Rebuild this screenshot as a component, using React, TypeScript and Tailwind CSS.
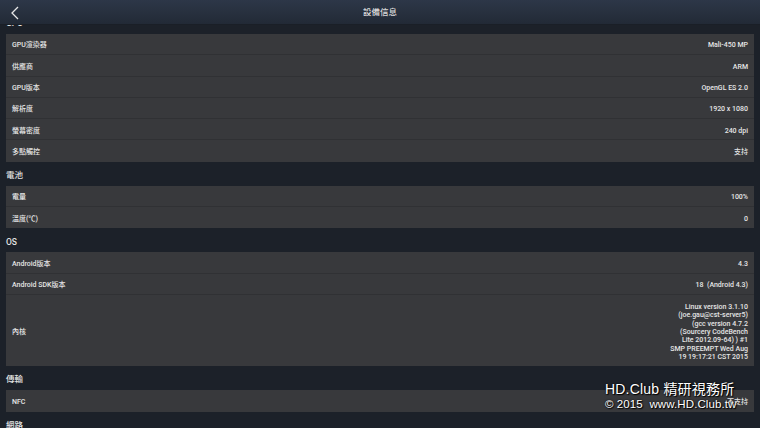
import React from 'react'

type Row = { label: string; value: React.ReactNode; tall?: boolean }

const sections: { title: string; rows: Row[] }[] = [
  {
    title: 'GPU',
    rows: [
      { label: 'GPU渲染器', value: 'Mali-450 MP' },
      { label: '供應商', value: 'ARM' },
      { label: 'GPU版本', value: 'OpenGL ES 2.0' },
      { label: '解析度', value: '1920 x 1080' },
      { label: '螢幕密度', value: '240 dpi' },
      { label: '多點觸控', value: '支持' },
    ],
  },
  {
    title: '電池',
    rows: [
      { label: '電量', value: '100%' },
      { label: '溫度(℃)', value: '0' },
    ],
  },
  {
    title: 'OS',
    rows: [
      { label: 'Android版本', value: '4.3' },
      { label: 'Android SDK版本', value: '18  (Android 4.3)' },
      {
        label: '內核',
        tall: true,
        value: [
          'Linux version 3.1.10',
          '(joe.gau@cst-server5)',
          '(gcc version 4.7.2',
          '(Sourcery CodeBench',
          'Lite 2012.09-64) ) #1',
          'SMP PREEMPT Wed Aug',
          '19 19:17:21 CST 2015',
        ].map((l) => <div key={l}>{l}</div>),
      },
    ],
  },
  {
    title: '傳輸',
    rows: [{ label: 'NFC', value: '不支持' }],
  },
  {
    title: '網路',
    rows: [{ label: 'Wi-Fi', value: '支持' }],
  },
]

function Section({ title, rows }: { title: string; rows: Row[] }) {
  return (
    <div>
      <div className="flex h-[24px] items-center px-[6px] pt-[3px] text-[8.5px] font-medium text-[#e4e4e4]">
        {title}
      </div>
      <div className="mx-[6px] bg-[#38393c]">
        {rows.map((r, i) => (
          <div
            key={r.label}
            className={`flex items-center justify-between px-[6px] pt-[3px] text-[7px] font-medium text-[#e6e6e6] ${
              r.tall ? 'h-[71.4px]' : 'h-[21.3px]'
            } ${i < rows.length - 1 ? 'border-b border-[#303134]' : ''}`}
          >
            <span>{r.label}</span>
            <div className="text-right leading-[8.33px] whitespace-pre">{r.value}</div>
          </div>
        ))}
      </div>
    </div>
  )
}

export default function App() {
  return (
    <div
      className="relative flex h-[428px] w-[760px] flex-col overflow-hidden bg-[#1c2129]"
      style={{ fontFamily: "Roboto, 'Noto Sans CJK TC', sans-serif" }}
    >
      <div className="relative z-10 flex h-[25px] shrink-0 items-center justify-center border-b border-[#1a1f27] bg-gradient-to-b from-[#2d3748] to-[#222a36] pt-[1px]">
        <svg
          className="absolute left-[10px] top-[6px]"
          width="10"
          height="14"
          viewBox="0 0 10 14"
          fill="none"
        >
          <path d="M8 1 L2 7 L8 13" stroke="#e8e8e8" strokeWidth="1.3" />
        </svg>
        <span className="text-[8.5px] font-medium text-[#dcdcdc]">設備信息</span>
      </div>

      <div className="-mt-[15px] flex flex-col">
        {sections.map((s) => (
          <Section key={s.title} title={s.title} rows={s.rows} />
        ))}
      </div>

      <div
        className="absolute left-[605px] top-[381px] z-20 text-white"
        style={{ fontFamily: "'Liberation Sans', 'Noto Sans CJK TC', sans-serif", textShadow: '0 0 2px #000, 1px 1px 1px #000' }}
      >
        <div className="text-[14px] leading-[17px] tracking-[0.2px]">HD.Club 精研視務所</div>
        <div className="text-[11.5px] leading-[12px] whitespace-pre tracking-[0.1px]">© 2015  www.HD.Club.tw</div>
      </div>
    </div>
  )
}
